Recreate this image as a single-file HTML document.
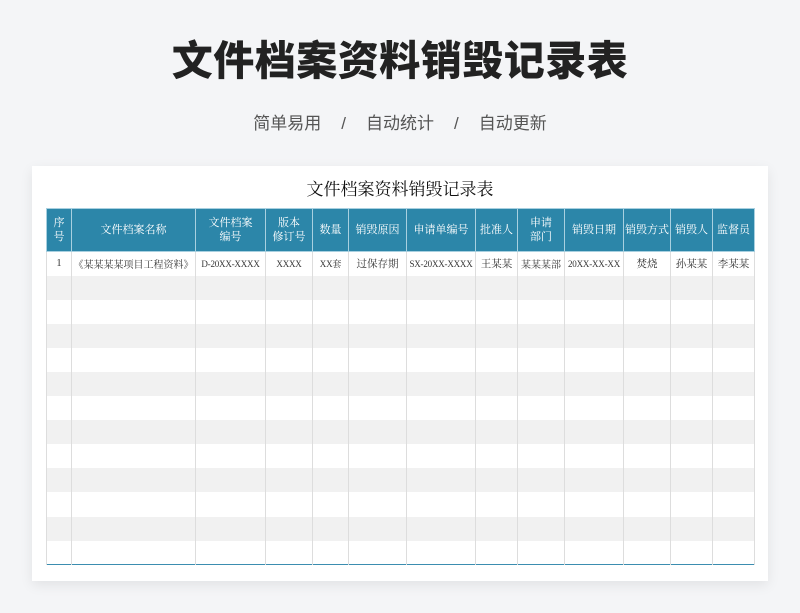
<!DOCTYPE html>
<html><head><meta charset="utf-8"><style>
*{margin:0;padding:0;box-sizing:border-box}
body{width:800px;height:613px;background:#f4f5f7;position:relative;overflow:hidden;font-family:"Liberation Sans","Noto Sans CJK SC",sans-serif}
.t{position:absolute;top:34px;left:0;width:800px;text-align:center;font-size:41px;font-weight:900;color:#222;letter-spacing:0.5px;line-height:54px}
.s{position:absolute;top:112px;left:0;width:800px;text-align:center;font-size:17px;color:#555;line-height:24px}
.s span{display:inline-block;margin:0 20px}
.card{position:absolute;left:32px;top:166px;width:736px;height:415px;background:#fff;box-shadow:0 4px 12px rgba(0,0,0,0.08)}
.ct{position:absolute;top:178px;left:0;width:800px;text-align:center;font-size:17px;color:#111;font-family:"Liberation Serif","Noto Serif CJK SC",serif;line-height:24px}
table{position:absolute;left:46px;top:208px;border-collapse:collapse;table-layout:fixed;width:708px;font-family:"Liberation Serif","Noto Serif CJK SC",serif;font-size:10.5px;border:1.5px solid #3b8db0}
th{background:#2c86a9;color:#fff;font-weight:normal;height:43px;border:1px solid #a8d0e0;line-height:14px;font-size:11px}
td{height:24.1px;border-left:1px solid #ddd;border-right:1px solid #ddd;text-align:center;color:#333;white-space:nowrap;overflow:hidden;background:#fff}
tbody tr:nth-child(even) td{background:#f1f1f1}
.n{font-size:9px;letter-spacing:-0.2px}
</style></head><body>
<div class="t">文件档案资料销毁记录表</div>
<div class="s"><span>简单易用</span>/<span>自动统计</span>/<span>自动更新</span></div>
<div class="card"></div>
<div class="ct">文件档案资料销毁记录表</div>
<table>
<colgroup><col style="width:25px"><col style="width:124px"><col style="width:70px"><col style="width:47px"><col style="width:36px"><col style="width:58px"><col style="width:69px"><col style="width:42px"><col style="width:47px"><col style="width:59px"><col style="width:47px"><col style="width:42px"><col style="width:42px"></colgroup>
<thead><tr><th>序<br>号</th><th>文件档案名称</th><th>文件档案<br>编号</th><th>版本<br>修订号</th><th>数量</th><th>销毁原因</th><th>申请单编号</th><th>批准人</th><th>申请<br>部门</th><th>销毁日期</th><th>销毁方式</th><th>销毁人</th><th>监督员</th></tr></thead>
<tbody>
<tr><td>1</td><td style="font-size:10px">《某某某某项目工程资料》</td><td class="n">D-20XX-XXXX</td><td class="n">XXXX</td><td class="n">XX套</td><td>过保存期</td><td class="n">SX-20XX-XXXX</td><td>王某某</td><td style="font-size:10px">某某某部</td><td class="n">20XX-XX-XX</td><td>焚烧</td><td>孙某某</td><td>李某某</td></tr>
<tr><td></td><td></td><td></td><td></td><td></td><td></td><td></td><td></td><td></td><td></td><td></td><td></td><td></td></tr>
<tr><td></td><td></td><td></td><td></td><td></td><td></td><td></td><td></td><td></td><td></td><td></td><td></td><td></td></tr>
<tr><td></td><td></td><td></td><td></td><td></td><td></td><td></td><td></td><td></td><td></td><td></td><td></td><td></td></tr>
<tr><td></td><td></td><td></td><td></td><td></td><td></td><td></td><td></td><td></td><td></td><td></td><td></td><td></td></tr>
<tr><td></td><td></td><td></td><td></td><td></td><td></td><td></td><td></td><td></td><td></td><td></td><td></td><td></td></tr>
<tr><td></td><td></td><td></td><td></td><td></td><td></td><td></td><td></td><td></td><td></td><td></td><td></td><td></td></tr>
<tr><td></td><td></td><td></td><td></td><td></td><td></td><td></td><td></td><td></td><td></td><td></td><td></td><td></td></tr>
<tr><td></td><td></td><td></td><td></td><td></td><td></td><td></td><td></td><td></td><td></td><td></td><td></td><td></td></tr>
<tr><td></td><td></td><td></td><td></td><td></td><td></td><td></td><td></td><td></td><td></td><td></td><td></td><td></td></tr>
<tr><td></td><td></td><td></td><td></td><td></td><td></td><td></td><td></td><td></td><td></td><td></td><td></td><td></td></tr>
<tr><td></td><td></td><td></td><td></td><td></td><td></td><td></td><td></td><td></td><td></td><td></td><td></td><td></td></tr>
<tr><td></td><td></td><td></td><td></td><td></td><td></td><td></td><td></td><td></td><td></td><td></td><td></td><td></td></tr>
</tbody></table>
</body></html>
